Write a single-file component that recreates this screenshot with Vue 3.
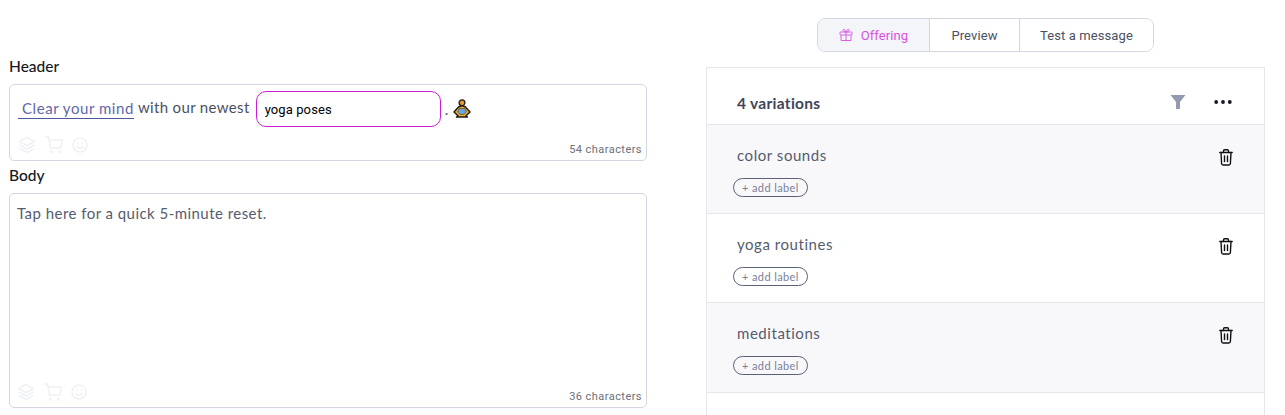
<script setup>
const rows = ['color sounds', 'yoga routines', 'meditations']
const boxes = [
  { label: 'Header', count: '54 characters' },
  { label: 'Body', count: '36 characters' }
]
</script>

<template>
  <div class="page">
    <section class="editor">
      <div v-for="(box, i) in boxes" :key="box.label" class="field" :class="i === 0 ? 'field-header' : 'field-body'">
        <div class="field-label">{{ box.label }}</div>
        <div class="field-box">
          <div v-if="i === 0" class="line">
            <span class="underlined">Clear your mind</span>
            <span class="plain">with our newest</span>
            <span class="token">yoga poses</span>
            <span class="plain dot">.</span>
            <svg class="emoji" width="18" height="19" viewBox="0 0 18 19">
              <path d="M9 6.5 L5.5 8 L1 13 L5 16.8 L3.5 18 H14.5 L13 16.8 L17 13 L12.5 8 Z" fill="#f6ad2b" stroke="#1d1a16" stroke-width="1.4" stroke-linejoin="round" />
              <circle cx="9" cy="3.8" r="2.9" fill="#e09a35" stroke="#1d1a16" stroke-width="1.3" />
              <path d="M6.2 9.6 H11.8 L13.4 13 L10.8 15.4 H7.2 L4.6 13 Z" fill="#6ba6dc" stroke="#1d1a16" stroke-width="0.5" />
            </svg>
          </div>
          <div v-else class="body-text">Tap here for a quick 5-minute reset.</div>
          <div class="field-foot">
            <div class="tools">
              <svg width="18" height="18" viewBox="0 0 18 18" fill="none" stroke="#f0f1f4" stroke-width="1.5" stroke-linejoin="round">
                <path d="M9 1.5 L16.5 5.5 L9 9.5 L1.5 5.5 Z" />
                <path d="M1.5 9 L9 13 L16.5 9" />
                <path d="M1.5 12.5 L9 16.5 L16.5 12.5" />
              </svg>
              <svg width="20" height="18" viewBox="0 0 20 18" fill="none" stroke="#f0f1f4" stroke-width="1.5" stroke-linejoin="round">
                <path d="M1 1 H4.5 L6.5 12 H16.5 L18.5 4 H5" />
                <circle cx="7.5" cy="16" r="0.8" />
                <circle cx="15.5" cy="16" r="0.8" />
              </svg>
              <svg width="16" height="16" viewBox="0 0 16 16" fill="none" stroke="#f0f1f4" stroke-width="1.5" stroke-linecap="round">
                <circle cx="8" cy="8" r="7" />
                <path d="M4.8 9.5 C6 12 10 12 11.2 9.5" />
                <path d="M5.5 6 V6.2 M10.5 6 V6.2" />
              </svg>
            </div>
            <span class="count">{{ box.count }}</span>
          </div>
        </div>
      </div>
    </section>

    <section class="side">
      <div class="tabs">
        <button class="tab tab-active">
          <svg width="14" height="14" viewBox="0 0 14 14" fill="none" stroke="#da5fe4" stroke-width="1" stroke-linejoin="round">
            <rect x="1" y="4" width="12" height="3" rx="0.6" />
            <path d="M2 7 V12.5 H12 V7 M7 4 V12.5" />
            <path d="M7 4 C5 4 3.8 3.2 4 2 C4.3 0.8 6 1 7 4 C8 1 9.7 0.8 10 2 C10.2 3.2 9 4 7 4 Z" />
          </svg>
          Offering
        </button>
        <button class="tab tab-preview">Preview</button>
        <button class="tab tab-test">Test a message</button>
      </div>

      <div class="panel">
        <div class="panel-head">
          <span class="panel-title">4 variations</span>
          <div class="panel-actions">
            <svg width="16" height="16" viewBox="0 0 16 16">
              <path d="M0.5 1 H15.5 L10 8 V15 H6 V8 Z" fill="#949bb0" />
            </svg>
            <svg width="18" height="4" viewBox="0 0 18 4" fill="#15181f">
              <circle cx="2.2" cy="2" r="1.9" />
              <circle cx="9" cy="2" r="1.9" />
              <circle cx="15.8" cy="2" r="1.9" />
            </svg>
          </div>
        </div>
        <div v-for="(row, i) in rows" :key="row" class="row" :class="{ shaded: i % 2 === 0 }">
          <div class="row-top">
            <span class="row-name">{{ row }}</span>
            <svg class="trash" width="14" height="17" viewBox="0 0 14 17" fill="none" stroke="#111" stroke-width="1.4" stroke-linecap="round" stroke-linejoin="round">
              <path d="M0.8 3.5 H13.2" />
              <path d="M4.5 3.5 V2 C4.5 1.2 5 0.8 5.7 0.8 H8.3 C9 0.8 9.5 1.2 9.5 2 V3.5" />
              <path d="M2 3.5 L2.6 14.5 C2.7 15.5 3.2 16 4 16 H10 C10.8 16 11.3 15.5 11.4 14.5 L12 3.5" />
              <path d="M5.5 7 V12.5 M8.5 7 V12.5" />
            </svg>
          </div>
          <span class="add-label">+ add label</span>
        </div>
      </div>
    </section>
  </div>
</template>

<style scoped>
.page {
  display: flex;
  height: 415px;
  overflow: hidden;
  background: #fff;
  font-family: Lato, "Noto Sans", sans-serif;
  color: #4a5064;
}

.editor {
  width: 638px;
  margin-left: 9px;
  padding-top: 56px;
  flex-shrink: 0;
}

.field-label {
  font-size: 15.5px;
  line-height: 20px;
  font-weight: 500;
  color: #15181f;
}

.field-header .field-label {
  margin-bottom: 8px;
}

.field-body {
  margin-top: 4px;
}

.field-body .field-label {
  margin-bottom: 8px;
}

.field-box {
  box-sizing: border-box;
  display: flex;
  flex-direction: column;
  justify-content: space-between;
  border: 1px solid #d3d7e0;
  border-radius: 5px;
}

.field-header .field-box {
  height: 77px;
  padding: 6px 4px 3px 8px;
}

.field-body .field-box {
  height: 215px;
  padding: 9px 4px 3px 7px;
}

.line {
  display: flex;
  align-items: center;
  gap: 4px;
  height: 36px;
  font-size: 15px;
  color: #4a5064;
}

.plain {
  position: relative;
  top: -2px;
  letter-spacing: 0.35px;
}

.underlined {
  position: relative;
  top: -1px;
  padding-left: 4px;
  line-height: 20px;
  letter-spacing: 0.55px;
  color: #5f68a8;
  border-bottom: 1px solid #4f589c;
}

.token {
  box-sizing: border-box;
  width: 185px;
  height: 36px;
  margin-left: 2px;
  padding-left: 8px;
  display: flex;
  align-items: center;
  border: 1px solid #c71fd6;
  border-radius: 10px;
  font-family: Roboto, sans-serif;
  font-size: 13px;
  letter-spacing: 0.1px;
  color: #000;
}

.dot {
  margin-left: 0;
  top: 0;
}

.emoji {
  margin-bottom: 2px;
}

.body-text {
  font-size: 15px;
  line-height: 20px;
  letter-spacing: 0.46px;
  color: #555b6e;
}

.field-foot {
  display: flex;
  align-items: flex-end;
  justify-content: space-between;
}

.tools {
  display: flex;
  align-items: center;
  gap: 8px;
  margin-bottom: 3px;
}

.count {
  font-family: Roboto, sans-serif;
  font-size: 11px;
  line-height: 14px;
  color: #6b6f7a;
  letter-spacing: 0.45px;
}

.side {
  width: 559px;
  margin-left: 59px;
  flex-shrink: 0;
  display: flex;
  flex-direction: column;
}

.tabs {
  display: flex;
  flex-shrink: 0;
  align-self: flex-start;
  margin: 18px 0 15px 111px;
  height: 34px;
  box-sizing: border-box;
  border: 1px solid #d3d7e0;
  border-radius: 8px;
  overflow: hidden;
}

.tab {
  display: flex;
  align-items: center;
  justify-content: center;
  gap: 8px;
  border: 0;
  background: #fff;
  font-family: Roboto, sans-serif;
  font-size: 13px;
  letter-spacing: 0.1px;
  color: #4a5064;
  padding: 0;
}

.tab-active {
  width: 111px;
  background: #f4f5f8;
  color: #d94fe3;
}

.tab-preview {
  width: 90px;
  border-left: 1.5px solid #d3d7e0;
}

.tab-test {
  width: 134px;
  border-left: 1.5px solid #d3d7e0;
}

.panel {
  flex: 1 0 auto;
  border: 1px solid #e5e7ec;
  border-bottom: 0;
}

.panel-head {
  box-sizing: border-box;
  height: 57px;
  display: flex;
  align-items: center;
  justify-content: space-between;
  padding: 11px 32px 0 30px;
  border-bottom: 1px solid #e5e7ec;
}

.panel-title {
  margin-top: 3px;
  font-size: 15.5px;
  font-weight: 700;
  letter-spacing: 0.3px;
  color: #3f4659;
}

.panel-actions {
  display: flex;
  align-items: center;
  gap: 28px;
}

.row {
  box-sizing: border-box;
  height: 89.2px;
  padding: 20px 31px 0 30px;
  border-bottom: 1px solid #e5e7ec;
}

.shaded {
  background: #f8f8fb;
}

.row-top {
  display: flex;
  justify-content: space-between;
  align-items: flex-start;
  height: 31px;
}

.trash {
  margin-top: 3.5px;
}

.row-name {
  font-size: 15px;
  line-height: 20px;
  letter-spacing: 0.55px;
  color: #555b6e;
}

.add-label {
  display: inline-block;
  margin-left: -4px;
  padding: 0 8px;
  font-size: 11px;
  line-height: 17px;
  color: #7a8198;
  border: 1px solid #5b6178;
  border-radius: 10px;
  letter-spacing: 0.4px;
}
</style>
